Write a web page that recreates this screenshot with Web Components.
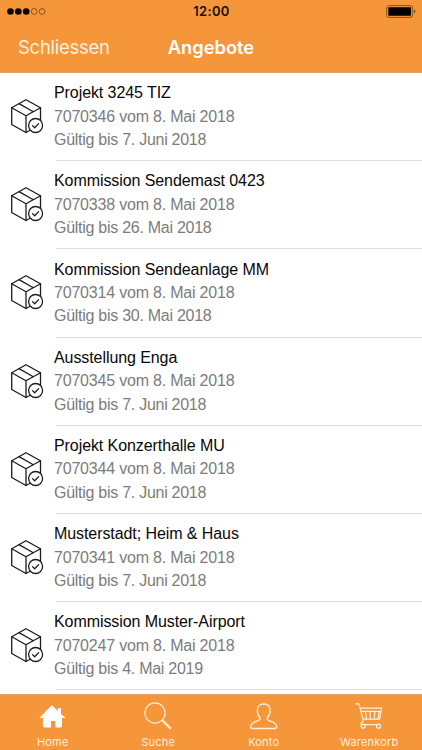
<!DOCTYPE html>
<html lang="de">
<head>
  <meta charset="UTF-8">
  <meta name="viewport" content="width=device-width, initial-scale=1">
  <title>Angebote</title>
  <style>
    body {
      margin: 0;
      background: #fff;
      font-family: "Liberation Sans", Arial, sans-serif;
    }
  </style>
</head>
<body>
  <offers-app></offers-app>

  <script>
    const offers = [
      {title: 'Projekt 3245 TIZ', number: '7070346', date: '8. Mai 2018', validUntil: '7. Juni 2018'},
      {title: 'Kommission Sendemast 0423', number: '7070338', date: '8. Mai 2018', validUntil: '26. Mai 2018'},
      {title: 'Kommission Sendeanlage MM', number: '7070314', date: '8. Mai 2018', validUntil: '30. Mai 2018'},
      {title: 'Ausstellung Enga', number: '7070345', date: '8. Mai 2018', validUntil: '7. Juni 2018'},
      {title: 'Projekt Konzerthalle MU', number: '7070344', date: '8. Mai 2018', validUntil: '7. Juni 2018'},
      {title: 'Musterstadt; Heim &amp; Haus', number: '7070341', date: '8. Mai 2018', validUntil: '7. Juni 2018'},
      {title: 'Kommission Muster-Airport', number: '7070247', date: '8. Mai 2018', validUntil: '4. Mai 2019'}
    ];

    const icons = {
      home: `<path fill="#fff" d="M13.2 3.4 L18.800 8.900 V6.300 H22 V12 L26.700 16 H23 V23.800 Q23 25.600 21.500 25.600 H16.300 V19.100 H12 V25.600 H5.800 Q3.900 25.600 3.900 23.800 V16 H.3 L12 3.900 Q12.700 2.800 13.200 3.400 Z"/>`,
      search: `<circle cx="11" cy="11" r="10.100" stroke-width="1.200"/><path stroke-width="1.200" d="M18.200 18.200 L19.500 19.500"/><path stroke-width="2.300" d="M18.700 18.700 L26.900 26.700"/>`,
      user: `<path stroke-width="1.300" d="M10.300 16.300 C8.700 14.600 7.300 11.600 7.300 8.300 C7.300 4.500 9.800 2 13.700 2 C17.600 2 20.100 4.500 20.100 8.300 C20.100 11.600 18.700 14.600 17.100 16.300 C16.800 17.700 18 18.200 20.500 19.100 C24.700 20.600 26.700 21.800 26.700 25 Q26.700 26.500 25.200 26.500 H2.200 Q.7 26.500 .7 25 C.7 21.800 2.700 20.600 6.900 19.100 C9.400 18.200 10.600 17.700 10.300 16.300 Z"/>`,
      cart: `<g stroke-width="1.200"><path d="M.3 1.800 H3.900 L8.300 18 Q8.700 19.700 6.900 20.200 Q5 21.300 6.700 22.700 H23"/><path d="M5.100 6.100 H26.700 L24.600 17.200 H8.100 M5.900 9.400 H26 M10.400 9.400 L11.600 17.200 M15.100 9.400 L15.500 17.200 M19.800 9.400 L19.300 17.200 M24.200 9.400 L22.900 17.200"/><circle cx="8" cy="24.200" r="2"/><circle cx="23.600" cy="24.200" r="2"/></g>`
    };

    class StatusBar extends HTMLElement {
      constructor() {
        super();
        this.attachShadow({mode: 'open'}).innerHTML = `
          <style>
            :host {
              display: grid;
              grid-template-columns: 1fr auto 1fr;
              align-items: center;
              height: 23px;
              padding: 0 6px 0 7px;
              color: #1a0d00;
              font: 600 13px/23px Inter, sans-serif;
            }
            svg { display: block; }
            .battery { justify-self: end; }
            .time { letter-spacing: .3px; }
          </style>
          <svg width="40" height="9" viewBox="0 0 40 9">
            <g fill="#000"><circle cx="3.500" cy="4.500" r="3.300"/><circle cx="11.300" cy="4.500" r="3.300"/><circle cx="19.200" cy="4.500" r="3.300"/></g>
            <g fill="none" stroke="#824b16" stroke-width=".9"><circle cx="27.200" cy="4.500" r="2.900"/><circle cx="35.100" cy="4.500" r="2.900"/></g>
          </svg>
          <span class="time">12:00</span>
          <svg class="battery" width="30" height="13" viewBox="0 0 30 13">
            <rect x=".7" y=".6" width="26" height="11.800" rx="2.500" fill="none" stroke="#865222"/>
            <rect x="2.300" y="2.200" width="22.800" height="8.600" rx=".8" fill="#000"/>
            <path d="M28 4.600 Q29.600 5.300 29.600 6.500 Q29.600 7.700 28 8.400 Z" fill="#865222"/>
          </svg>
        `;
      }
    }

    class NavBar extends HTMLElement {
      constructor() {
        super();
        this.attachShadow({mode: 'open'}).innerHTML = `
          <style>
            :host {
              display: grid;
              grid-template-columns: 1fr auto 1fr;
              align-items: center;
              height: 50px;
              box-sizing: border-box;
              padding: 0 18px;
              border-bottom: 1px solid #d9a079;
              color: #fff;
              font: 18.500px/49px Inter, sans-serif;
            }
            .back {
              color: #fff0dc;
              letter-spacing: -.26px;
            }
            h1 {
              margin: 0;
              font-size: 18.300px;
              font-weight: 600;
            }
          </style>
          <span class="back"><slot name="back"></slot></span>
          <h1><slot></slot></h1>
        `;
      }
    }

    class OfferItem extends HTMLElement {
      constructor() {
        super();
        this.shadowDOM = this.attachShadow({mode: 'open'});
      }

      set offer(offer) {
        this._offer = offer;
        this.render();
      }

      render() {
        this.shadowDOM.innerHTML = `
          <style>
            :host {
              display: flex;
              height: 88.200px;
            }
            svg {
              flex: none;
              margin: 25px 10px 0 10px;
            }
            .offer-info {
              flex: 1;
              box-sizing: border-box;
              padding-top: 8.300px;
              position: relative;
              white-space: nowrap;
            }
            .offer-info::after {
              content: "";
              position: absolute;
              left: 2px;
              right: 0;
              bottom: 0;
              height: 1px;
              background: #dddddf;
            }
            h2, p {
              margin: 0;
              font-size: 16px;
              font-weight: normal;
              line-height: 23.400px;
            }
            h2 {
              color: #080808;
              letter-spacing: -.08px;
            }
            p {
              color: #7c7c7c;
              letter-spacing: -.2px;
            }
            .valid { letter-spacing: -.27px; }
          </style>
          <svg width="34" height="36" viewBox="0 0 34 36" fill="none" stroke="#1c1c1c" stroke-width="1.300" stroke-linejoin="round" stroke-linecap="round">
            <path d="M16 1.700 L30.500 9.700 V26.500 L16 34.500 L1.700 26.500 V9.700 Z"/>
            <path d="M1.700 9.700 L16 17.700 L30.500 9.700 M16 17.700 V34.500 M9 5.600 L23.300 13.700"/>
            <circle cx="25.600" cy="27.500" r="7" fill="#fff"/>
            <path d="M22.500 27.600 L24.700 29.700 L28.600 25.600"/>
          </svg>
          <div class="offer-info">
            <h2>${this._offer.title}</h2>
            <p>${this._offer.number} vom ${this._offer.date}</p>
            <p class="valid">Gültig bis ${this._offer.validUntil}</p>
          </div>
        `;
      }
    }

    class OfferList extends HTMLElement {
      constructor() {
        super();
        this.shadowDOM = this.attachShadow({mode: 'open'});
      }

      set offers(offers) {
        this.shadowDOM.innerHTML = `
          <style>
            :host {
              display: block;
              overflow: hidden;
            }
          </style>
        `;
        offers.forEach(offer => {
          const item = document.createElement('offer-item');
          item.offer = offer;
          this.shadowDOM.appendChild(item);
        });
      }
    }

    class TabItem extends HTMLElement {
      connectedCallback() {
        this.attachShadow({mode: 'open'}).innerHTML = `
          <style>
            :host {
              display: flex;
              flex-direction: column;
              align-items: center;
              flex: 1;
              padding-top: 7px;
              color: #fff0dc;
              font: 11px/14px Inter, sans-serif;
              letter-spacing: .2px;
            }
            svg {
              flex: none;
              margin-bottom: 5px;
            }
          </style>
          <svg width="28" height="28" viewBox="0 0 28 28" fill="none" stroke-linejoin="round" ${this.getAttribute('icon') === 'home' ? '' : 'stroke="#fff0dc"'}>
            ${icons[this.getAttribute('icon')]}
          </svg>
          <span><slot></slot></span>
        `;
      }
    }

    class OffersApp extends HTMLElement {
      constructor() {
        super();
        this.shadowDOM = this.attachShadow({mode: 'open'});
        this.shadowDOM.innerHTML = `
          <style>
            :host {
              display: flex;
              flex-direction: column;
              height: 100vh;
              overflow: hidden;
            }
            header, nav {
              flex: none;
              background: #f6963b;
            }
            offer-list {
              flex: 1;
              min-height: 0;
            }
            nav {
              display: flex;
              height: 56px;
              box-sizing: border-box;
              border-top: 1px solid #e2a269;
            }
          </style>
          <header>
            <status-bar></status-bar>
            <nav-bar><span slot="back">Schliessen</span>Angebote</nav-bar>
          </header>
          <offer-list></offer-list>
          <nav>
            <tab-item icon="home">Home</tab-item>
            <tab-item icon="search">Suche</tab-item>
            <tab-item icon="user">Konto</tab-item>
            <tab-item icon="cart">Warenkorb</tab-item>
          </nav>
        `;
      }

      connectedCallback() {
        this.shadowDOM.querySelector('offer-list').offers = offers;
      }
    }

    customElements.define('status-bar', StatusBar);
    customElements.define('nav-bar', NavBar);
    customElements.define('offer-item', OfferItem);
    customElements.define('offer-list', OfferList);
    customElements.define('tab-item', TabItem);
    customElements.define('offers-app', OffersApp);
  </script>
</body>
</html>
